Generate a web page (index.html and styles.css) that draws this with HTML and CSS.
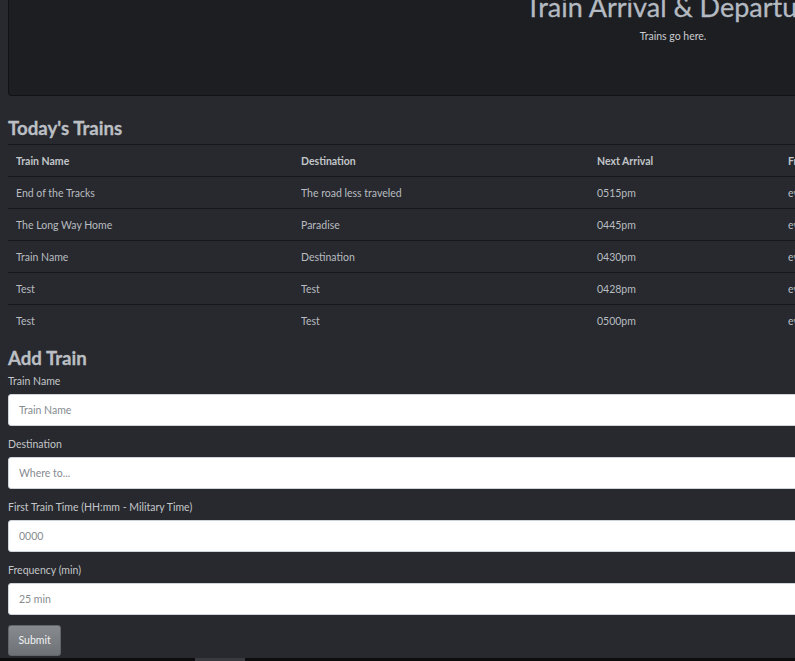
FILE: index.html
```html
<!DOCTYPE html>
<html lang="en">
<head>
<meta charset="utf-8">
<title>Train Scheduler</title>
<link rel="stylesheet" href="styles.css">
</head>
<body>
<div class="page">
  <header class="jumbotron">
    <h1 class="jumbo-title">Train Arrival &amp; Departure</h1>
    <p class="jumbo-lead">Trains go here.</p>
  </header>

  <h3 class="section-title">Today's Trains</h3>
  <table class="trains">
    <colgroup>
      <col class="c-name"><col class="c-dest"><col class="c-next"><col class="c-freq">
    </colgroup>
    <thead>
      <tr><th>Train Name</th><th>Destination</th><th>Next Arrival</th><th>Frequency (min)</th></tr>
    </thead>
    <tbody>
      <tr><td>End of the Tracks</td><td>The road less traveled</td><td>0515pm</td><td>every 30 min</td></tr>
      <tr><td>The Long Way Home</td><td>Paradise</td><td>0445pm</td><td>every 15 min</td></tr>
      <tr><td>Train Name</td><td>Destination</td><td>0430pm</td><td>every 25 min</td></tr>
      <tr><td>Test</td><td>Test</td><td>0428pm</td><td>every 5 min</td></tr>
      <tr><td>Test</td><td>Test</td><td>0500pm</td><td>every 10 min</td></tr>
    </tbody>
  </table>

  <h3 class="section-title add-title">Add Train</h3>
  <form class="add-form">
    <div class="form-group">
      <label class="form-label" for="name">Train Name</label>
      <input class="form-control" id="name" type="text" placeholder="Train Name">
    </div>
    <div class="form-group">
      <label class="form-label" for="dest">Destination</label>
      <input class="form-control" id="dest" type="text" placeholder="Where to...">
    </div>
    <div class="form-group">
      <label class="form-label" for="first">First Train Time (HH:mm - Military Time)</label>
      <input class="form-control" id="first" type="text" placeholder="0000">
    </div>
    <div class="form-group">
      <label class="form-label" for="freq">Frequency (min)</label>
      <input class="form-control" id="freq" type="text" placeholder="25 min">
    </div>
    <button class="btn-submit" type="button">Submit</button>
  </form>
</div>
<div class="hscroll"><div class="hscroll-thumb"></div></div>
</body>
</html>
```

FILE: styles.css
```css
html {
  overflow: hidden;
}
body {
  margin: 0;
  background: #27292e;
  font-family: Lato, "Open Sans", sans-serif;
  font-size: 10.5px;
  line-height: 16px;
  color: #c3c6ca;
}
.page {
  width: 1330px;
  margin: -53px 0 0 8px;
}
.jumbotron {
  background: #1d1e22;
  border: 1px solid #111214;
  border-radius: 3px;
  padding: 42.67px 21.33px 40px;
  margin-bottom: 21px;
  text-align: center;
}
.jumbo-title {
  margin: 0 0 5.33px;
  font-size: 27px;
  line-height: 32px;
  font-weight: 400;
  color: #b4bac1;
  -webkit-text-stroke: 0.3px #b4bac1;
}
.jumbo-lead {
  margin: 0 0 10.67px;
  color: #c9cbcf;
}
.section-title {
  margin: 0 0 5.33px;
  font-size: 18.67px;
  line-height: 22.4px;
  font-weight: 700;
  color: #bbbfc4;
  -webkit-text-stroke: 0.3px #bbbfc4;
}
.trains {
  width: 100%;
  table-layout: fixed;
  border-collapse: collapse;
  margin-bottom: 10.67px;
}
.c-name { width: 285px; }
.c-dest { width: 296px; }
.c-next { width: 191px; }
.trains th,
.trains td {
  text-align: left;
  padding: 7.5px 8px;
  line-height: 16px;
  border-top: 1px solid #17181b;
  white-space: nowrap;
}
.trains th {
  font-weight: 700;
  color: #c2c5c9;
}
.trains td {
  color: #b9bcc0;
}
.add-title {
  margin-bottom: 3.5px;
}
.form-group {
  margin-bottom: 10px;
}
.form-label {
  display: block;
  margin-bottom: 5.5px;
  color: #c4c6c9;
}
.form-control {
  display: block;
  box-sizing: border-box;
  width: 100%;
  height: 31.5px;
  padding: 0 10px;
  font-family: inherit;
  font-size: 10.5px;
  color: #495057;
  background: #ffffff;
  border: 1px solid #ced4da;
  border-radius: 3px;
}
.form-control::placeholder {
  color: #868b90;
}
.btn-submit {
  display: block;
  padding: 6.3px 9.5px;
  font-family: inherit;
  font-size: 10.5px;
  line-height: 16px;
  color: #f1f2f3;
  background: linear-gradient(#878b90, #6e7277);
  border: 1px solid #62666b;
  border-radius: 2.67px;
}
.hscroll {
  position: fixed;
  left: 0;
  right: 0;
  bottom: 0;
  height: 3px;
  background: #0d0d0f;
}
.hscroll-thumb {
  margin-left: 195px;
  width: 50px;
  height: 3px;
  background: #393a3f;
}
```
